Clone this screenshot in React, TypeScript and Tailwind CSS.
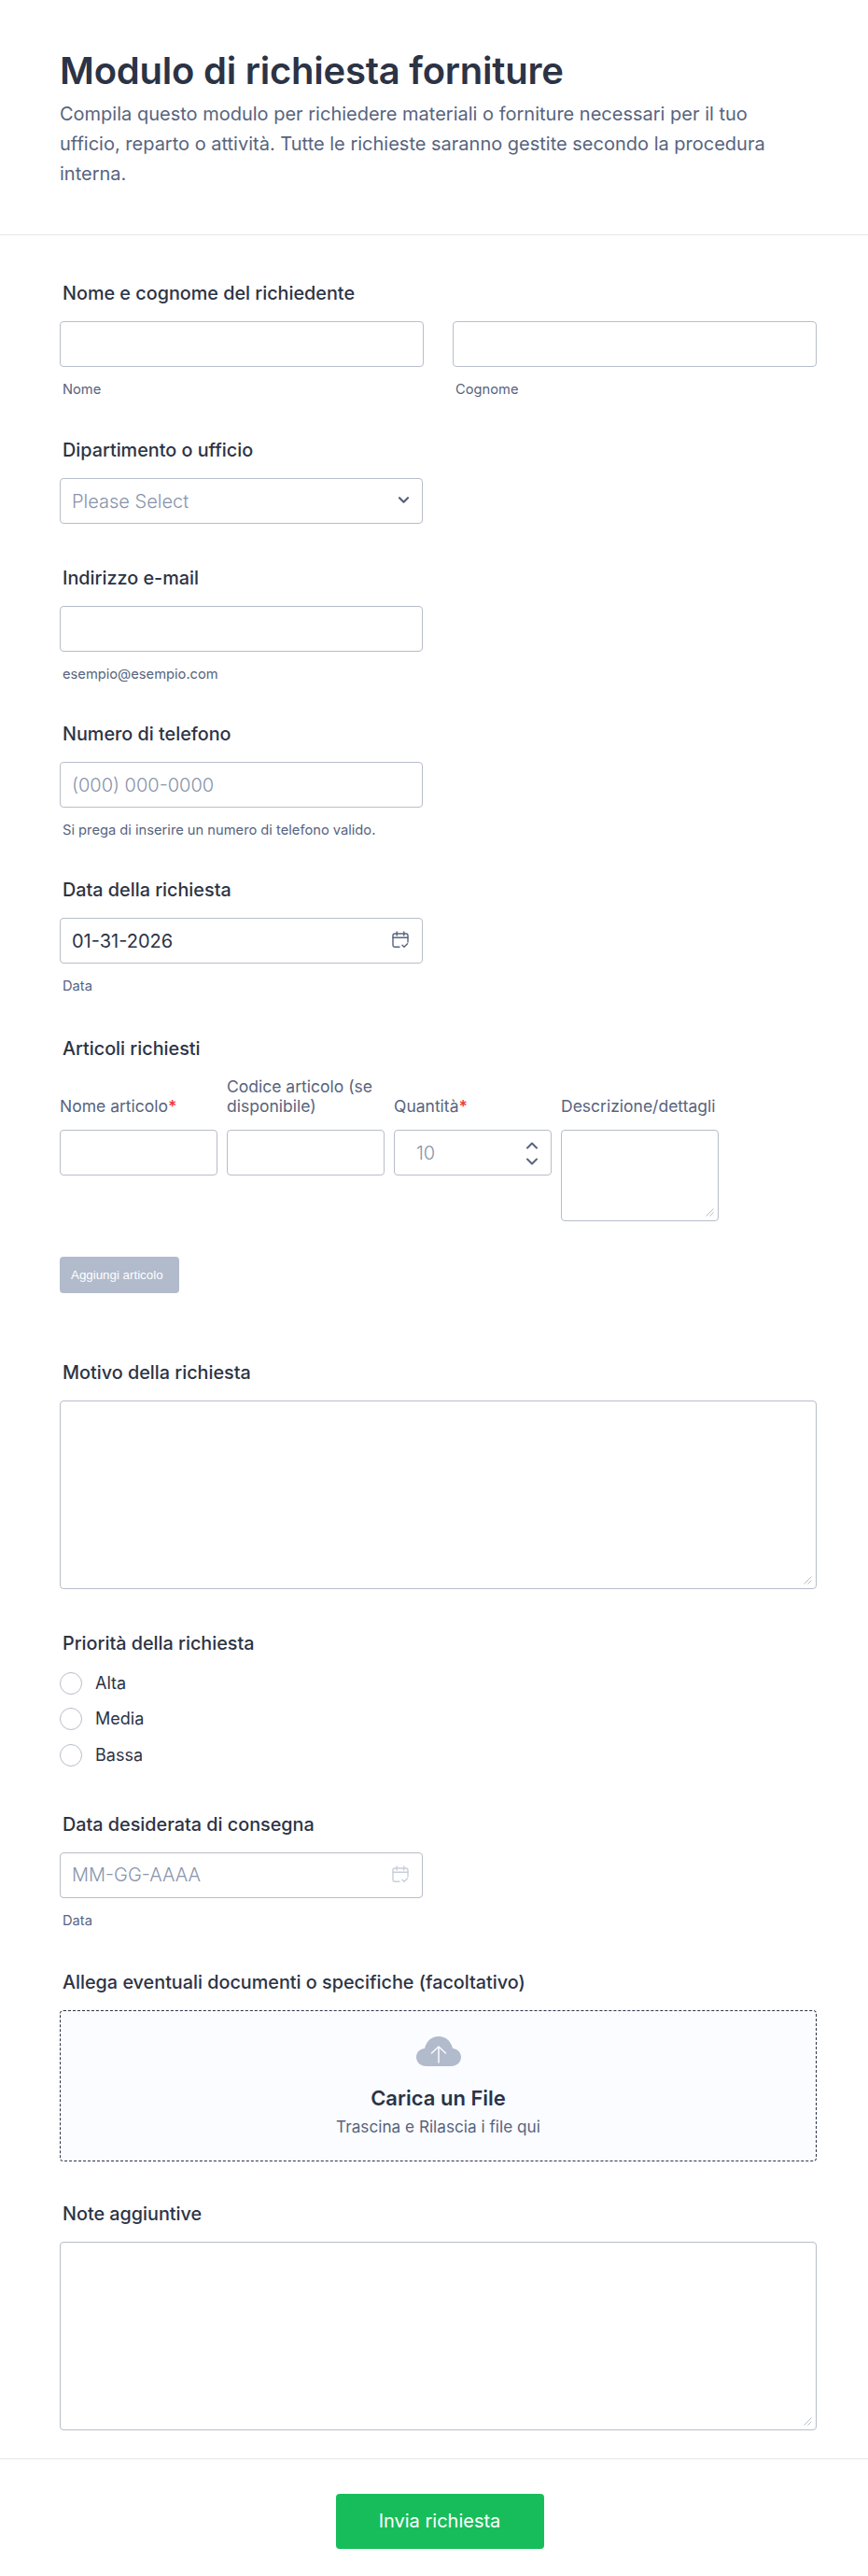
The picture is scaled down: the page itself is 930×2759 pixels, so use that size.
import { ReactNode } from "react";

const inputCls =
  "block w-full h-[49px] rounded-[4px] border border-[#b8bdc9] bg-white px-3 text-[20px] text-[#2c3345] placeholder:text-[#8894ab] placeholder:font-light outline-none";

function Label({ children }: { children: ReactNode }) {
  return <div className="h-6 mb-[18px] pl-[3px] text-[19.800px] leading-6 font-[450] text-[#2c3345]">{children}</div>;
}

function Sub({ children }: { children: ReactNode }) {
  return <div className="mt-[15px] pl-[3px] text-[14.700px] leading-[18px] text-[#57647e]">{children}</div>;
}

function TextBox({ className }: { className: string }) {
  return (
    <div className={`relative ${className}`}>
      <textarea className="block w-full h-full resize-none rounded-[4px] border border-[#b8bdc9] bg-white outline-none" />
      <svg
        viewBox="0 0 9 9"
        fill="none"
        stroke="#b8bdc9"
        strokeWidth="1"
        className="absolute right-[5px] bottom-[5px] w-[9px] h-[9px]"
      >
        <path d="M0.500 8.500l8-8M4.500 8.500l4-4" />
      </svg>
    </div>
  );
}

function CalendarIcon({ faded }: { faded?: boolean }) {
  return (
    <svg
      viewBox="0 0 18 19"
      fill="none"
      strokeWidth="1.4"
      strokeLinecap="round"
      strokeLinejoin="round"
      className={`absolute right-[15px] top-[14px] w-[18px] h-[19px] ${faded ? "stroke-[#c8ceda]" : "stroke-[#57647e]"}`}
    >
      <path d="M8 17.3H3a2 2 0 0 1-2-2V5a2 2 0 0 1 2-2h12a2 2 0 0 1 2 2v7" />
      <path d="M1 7.3h16M5.2 1v4M12.8 1v4" />
      <path d="M11 15.3l2 2 3.6-3.6" />
    </svg>
  );
}

function DateField({ value, placeholder, faded }: { value?: string; placeholder?: string; faded?: boolean }) {
  return (
    <div className="relative w-[389px]">
      <input className={inputCls} defaultValue={value} placeholder={placeholder} />
      <CalendarIcon faded={faded} />
    </div>
  );
}

function ColLabel({ children, required }: { children: ReactNode; required?: boolean }) {
  return (
    <div className="flex items-end text-[17.500px] leading-[21px] text-[#57647e]">
      <span>
        {children}
        {required && <span className="text-[#f23a3c] font-semibold">*</span>}
      </span>
    </div>
  );
}

export default function App() {
  return (
    <div className="w-[930px] min-h-[2759px] bg-white font-['Inter',sans-serif] text-[#2c3345]">
      <header className="h-[252px] border-b border-[#e3e5ea] px-16 pt-[52px]">
        <h1 className="text-[40px] leading-[48px] font-semibold tracking-[-0.24px]">Modulo di richiesta forniture</h1>
        <p className="mt-[6px] w-[802px] text-xl leading-8 text-[#57647e]">
          Compila questo modulo per richiedere materiali o forniture necessari per il tuo ufficio, reparto o attività.
          Tutte le richieste saranno gestite secondo la procedura interna.
        </p>
      </header>

      <main className="px-16 pt-[50px]">
        <section>
          <Label>Nome e cognome del richiedente</Label>
          <div className="grid grid-cols-2 gap-[31px] w-[811px]">
            <div>
              <input className={inputCls} />
              <Sub>Nome</Sub>
            </div>
            <div>
              <input className={inputCls} />
              <Sub>Cognome</Sub>
            </div>
          </div>
        </section>

        <section className="mt-[44px]">
          <Label>Dipartimento o ufficio</Label>
          <div className="relative w-[389px]">
            <select className={`${inputCls} appearance-none font-light text-[#8894ab]`} defaultValue="">
              <option value="">Please Select</option>
            </select>
            <svg
              viewBox="0 0 14 10"
              fill="none"
              className="absolute right-[14px] top-[19px] w-[13px] h-[9px] stroke-[#57647e]"
              strokeWidth="2.600"
              strokeLinecap="round"
              strokeLinejoin="round"
            >
              <path d="M2 2.5l5 5 5-5" />
            </svg>
          </div>
        </section>

        <section className="mt-[46px]">
          <Label>Indirizzo e-mail</Label>
          <div className="w-[389px]">
            <input className={inputCls} />
          </div>
          <Sub>esempio@esempio.com</Sub>
        </section>

        <section className="mt-[43px]">
          <Label>Numero di telefono</Label>
          <div className="w-[389px]">
            <input className={inputCls} placeholder="(000) 000-0000" />
          </div>
          <Sub>Si prega di inserire un numero di telefono valido.</Sub>
        </section>

        <section className="mt-[43px]">
          <Label>Data della richiesta</Label>
          <DateField value="01-31-2026" />
          <Sub>Data</Sub>
        </section>

        <section className="mt-[46px]">
          <Label>Articoli richiesti</Label>
          <div className="grid grid-cols-[169px_169px_169px_169px] gap-x-[10px]">
            <ColLabel required>Nome articolo</ColLabel>
            <ColLabel>Codice articolo (se disponibile)</ColLabel>
            <ColLabel required>Quantità</ColLabel>
            <ColLabel>Descrizione/dettagli</ColLabel>
            <div className="col-span-4 h-[15px]" />
            <input className={`${inputCls} h-[48px]`} />
            <input className={`${inputCls} h-[48px]`} />
            <div className="relative">
              <input className={`${inputCls} h-[48px] pl-[23px] text-[17px]`} placeholder="10" />
              <svg
                viewBox="0 0 14 34"
                fill="none"
                className="absolute right-[14px] top-[8px] w-[14px] h-[34px] stroke-[#57647e]"
                strokeWidth="2"
                strokeLinecap="round"
                strokeLinejoin="round"
              >
                <path d="M2 11.500l5-5 5 5M2 23.500l5 5 5-5" />
              </svg>
            </div>
            <TextBox className="w-full h-[98px]" />
          </div>
          <button
            type="button"
            className="mt-[38px] block w-[128px] h-[39px] rounded-[4px] bg-[#b1bbcc] pl-3 text-left font-['Liberation_Sans',sans-serif] text-[13.330px] text-white"
          >
            Aggiungi articolo
          </button>
        </section>

        <section className="mt-[73px]">
          <Label>Motivo della richiesta</Label>
          <TextBox className="w-[811px] h-[202px]" />
        </section>

        <section className="mt-[46px]">
          <div className="h-6 mb-[19px] pl-[3px] text-[19.800px] leading-6 font-[450]">Priorità della richiesta</div>
          <div className="flex flex-col gap-[14.300px]">
            {["Alta", "Media", "Bassa"].map((opt) => (
              <label key={opt} className="flex items-center gap-[14px] h-6 text-lg leading-6">
                <span className="w-6 h-6 rounded-full border border-[#b8bdc9] bg-white" />
                {opt}
              </label>
            ))}
          </div>
        </section>

        <section className="mt-[50px]">
          <Label>Data desiderata di consegna</Label>
          <DateField placeholder="MM-GG-AAAA" faded />
          <Sub>Data</Sub>
        </section>

        <section className="mt-[45px]">
          <Label>Allega eventuali documenti o specifiche (facoltativo)</Label>
          <div className="flex flex-col items-center w-[811px] h-[162px] rounded-[4px] border border-dashed border-[#2c3345] bg-[#fbfcff] pt-[27px]">
            <svg viewBox="0 0 48 32" className="w-12 h-8">
              <path
                d="M11 32C4.500 32 0 27.800 0 22.300 0 17 4 13.300 9 12.900 10.600 5.300 16.700 0 24 0s13.400 5.300 15 12.900c5 .4 9 4.100 9 9.400C48 27.800 43.500 32 37 32z"
                fill="#b1bbcc"
              />
              <path
                d="M24 28V11M16.500 18L24 11l7.500 7"
                fill="none"
                stroke="#fbfcff"
                strokeWidth="1.500"
                strokeLinecap="round"
                strokeLinejoin="round"
              />
            </svg>
            <div className="mt-[22px] text-[22px] leading-6 font-semibold">Carica un File</div>
            <div className="mt-[7px] text-[17.200px] leading-6 text-[#57647e]">Trascina e Rilascia i file qui</div>
          </div>
        </section>

        <section className="mt-[44px]">
          <Label>Note aggiuntive</Label>
          <TextBox className="w-[811px] h-[202px]" />
        </section>
      </main>

      <footer className="mt-[30px] border-t border-[#e3e5ea] pt-[37px] pl-3 flex justify-center">
        <button type="button" className="w-[223px] h-[59px] rounded-[4px] bg-[#18bd5b] text-xl text-white">
          Invia richiesta
        </button>
      </footer>
    </div>
  );
}
